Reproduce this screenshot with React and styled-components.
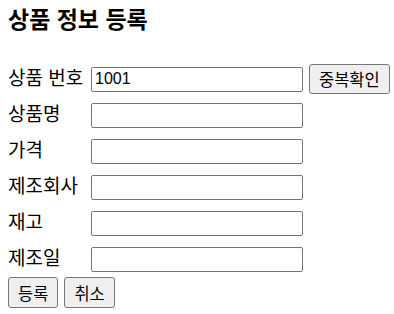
import React from 'react'
import styled, { createGlobalStyle } from 'styled-components'

const GlobalStyle = createGlobalStyle`
    body {
        margin: 0;
        background: #ffffff;
        font-family: "Liberation Sans", "Noto Sans CJK KR", sans-serif;
        color: #000000;
    }
`

const Page = styled.div`
    padding: 6px 8px 0 8px;
`

const Title = styled.h3`
    margin: 0;
    font-size: 23px;
    line-height: 28px;
    font-weight: 700;
`

const Form = styled.form`
    margin-top: 27px;
    display: flex;
    flex-direction: column;
`

const Row = styled.div`
    display: grid;
    grid-template-columns: 83px 212px auto;
    align-items: center;
    height: 36px;
`

const Label = styled.label`
    font-size: 19px;
    line-height: 26px;
    white-space: nowrap;
`

const Input = styled.input`
    box-sizing: border-box;
    width: 212px;
    height: 25px;
    padding: 1px 3px;
    border: 1px solid #767676;
    border-radius: 2px;
    font-family: "Liberation Sans", "Noto Sans CJK KR", sans-serif;
    font-size: 16px;
    color: #000000;
    background: #ffffff;
`

const Button = styled.button`
    box-sizing: border-box;
    height: ${(props) => (props.tall ? '31px' : '30px')};
    margin-left: ${(props) => (props.inline ? '6px' : '0')};
    padding: 0 9px;
    border: 1px solid #767676;
    border-radius: 3px;
    background: #efefef;
    font-family: "Liberation Sans", "Noto Sans CJK KR", sans-serif;
    font-size: 16.5px;
    color: #000000;
    white-space: nowrap;
    justify-self: start;
`

const Actions = styled.div`
    display: flex;
    gap: 6px;
`

const fields = [
    { label: '상품 번호', value: '1001', check: true },
    { label: '상품명', value: '' },
    { label: '가격', value: '' },
    { label: '제조회사', value: '' },
    { label: '재고', value: '' },
    { label: '제조일', value: '' },
]

const App = () => {
    return (
        <Page>
            <GlobalStyle />
            <Title>상품 정보 등록</Title>
            <Form onSubmit={(e) => e.preventDefault()}>
                {fields.map((f) => (
                    <Row key={f.label}>
                        <Label>{f.label}</Label>
                        <Input type="text" defaultValue={f.value} />
                        {f.check && (
                            <Button type="button" inline>
                                중복확인
                            </Button>
                        )}
                    </Row>
                ))}
                <Actions>
                    <Button type="submit" tall>등록</Button>
                    <Button type="reset" tall>취소</Button>
                </Actions>
            </Form>
        </Page>
    )
}

export default App
